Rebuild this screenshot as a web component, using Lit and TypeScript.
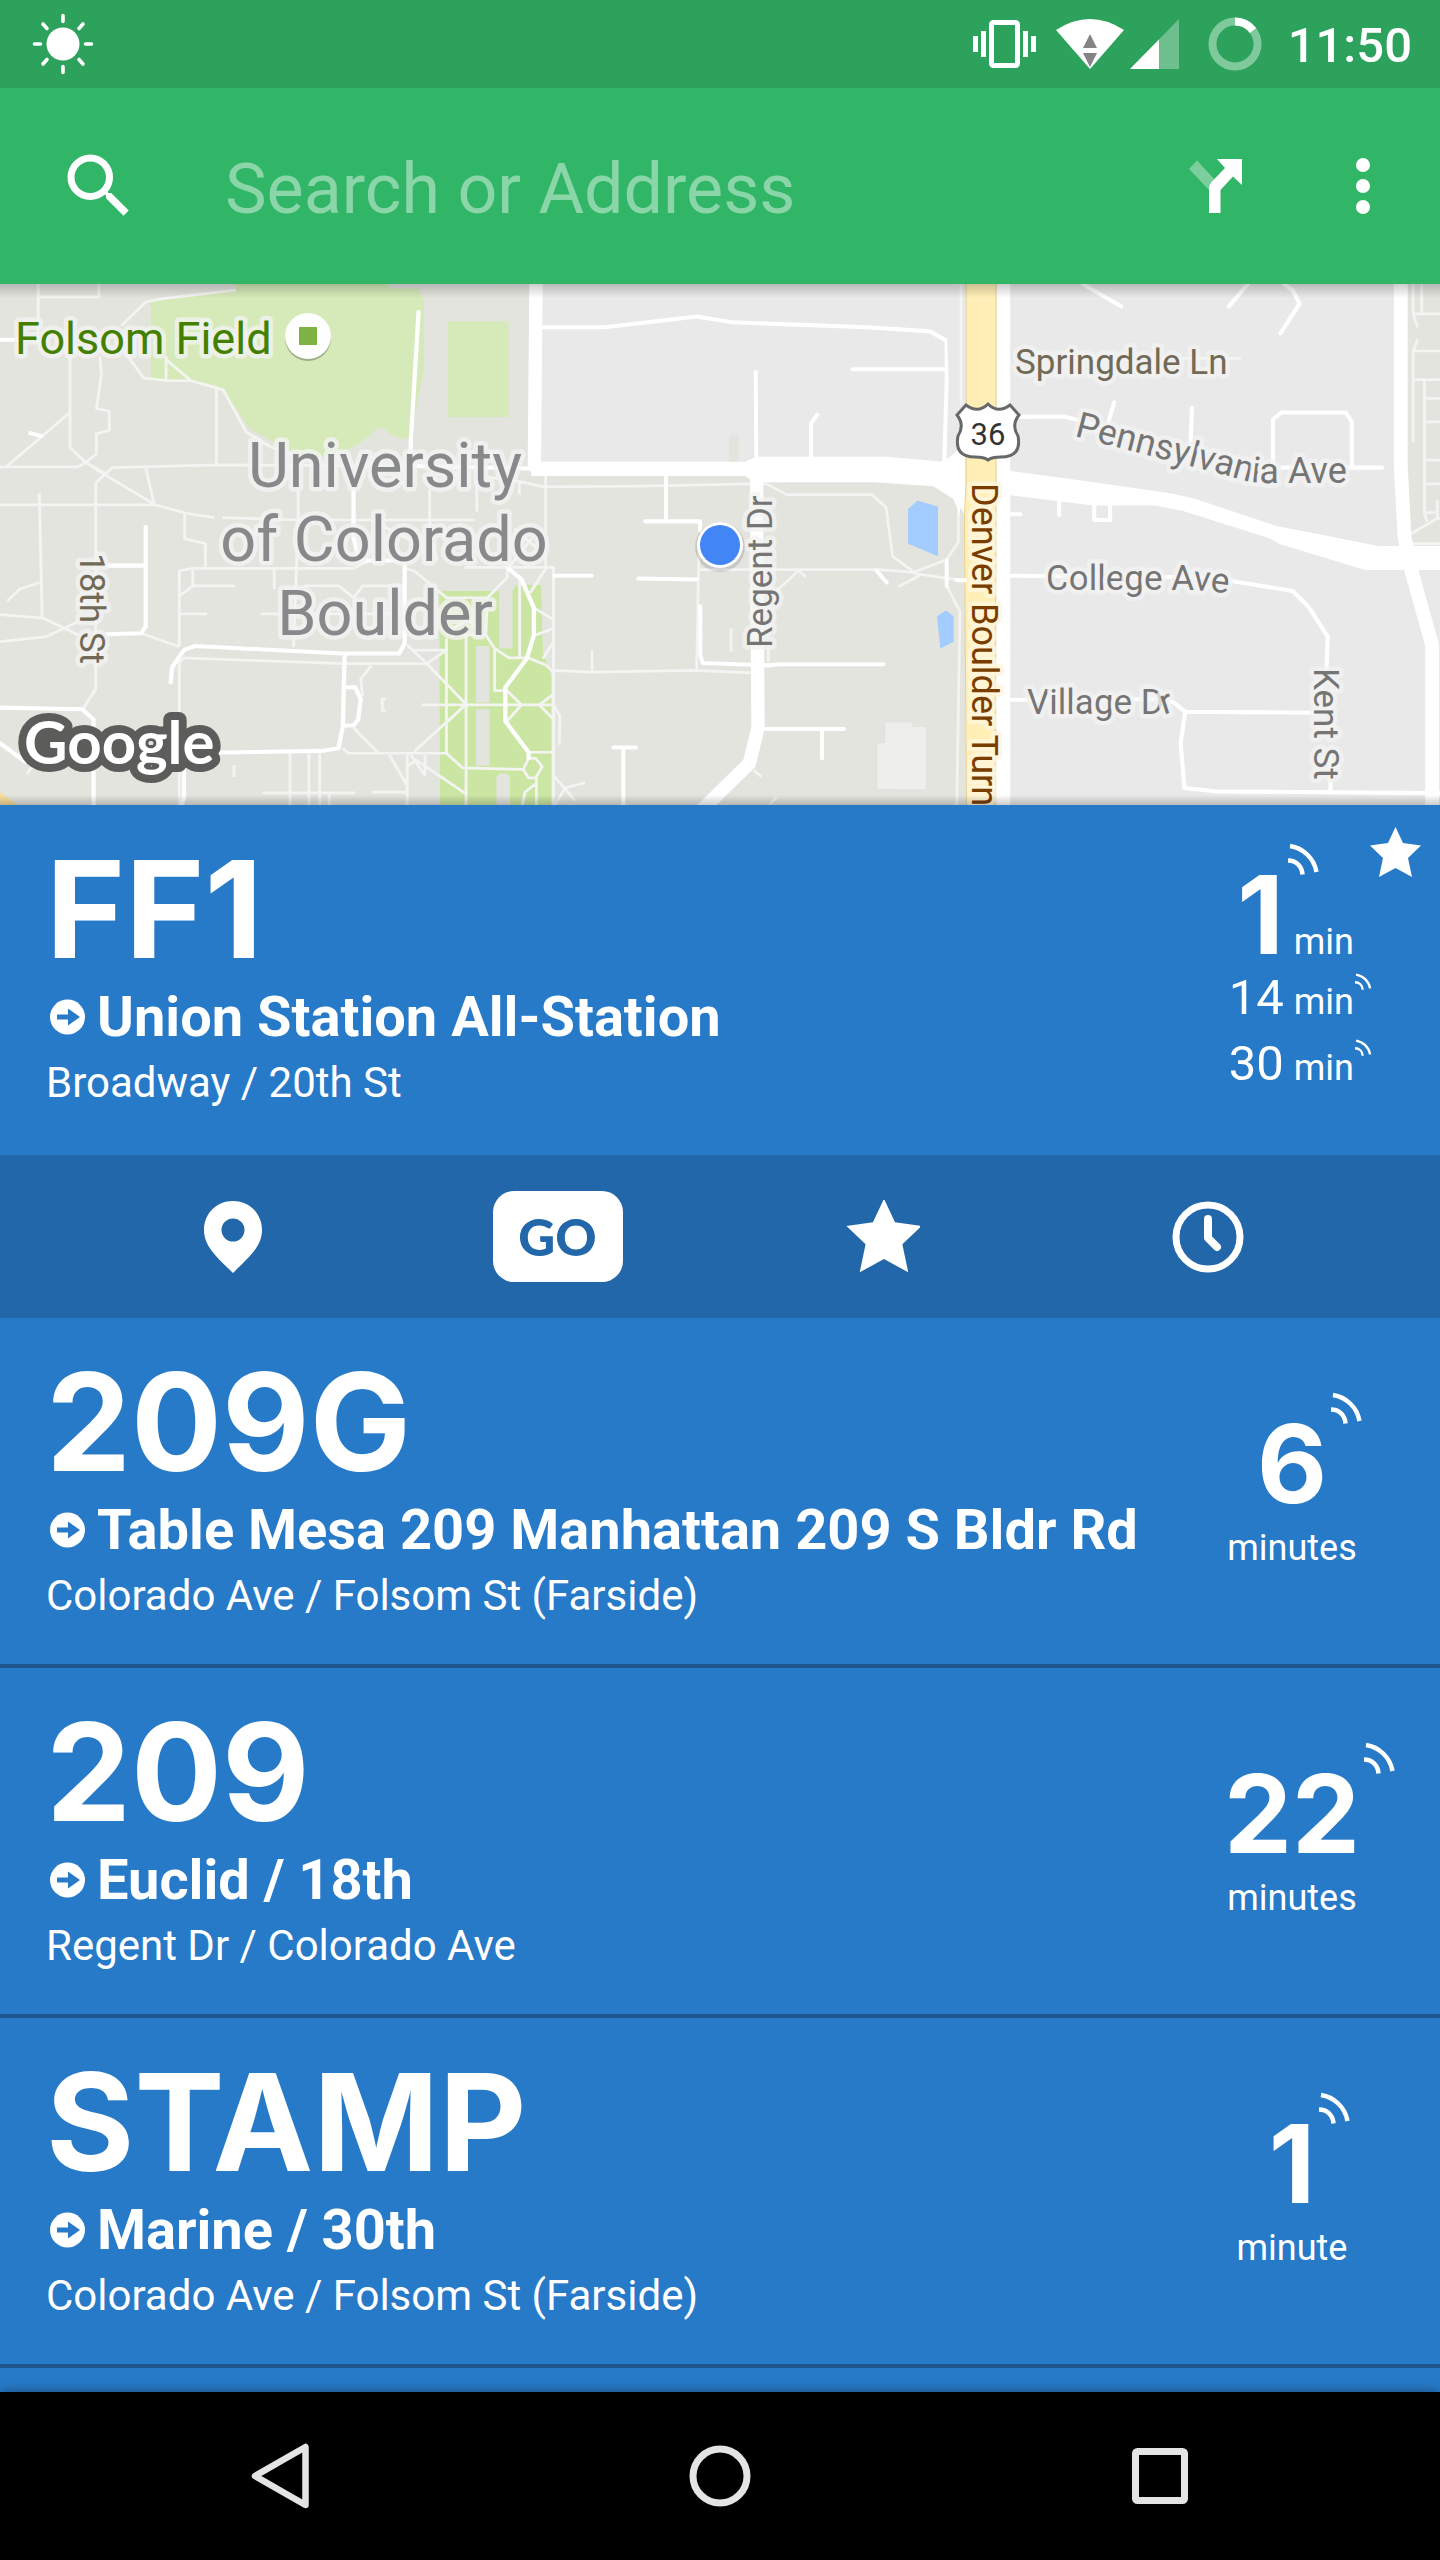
import { LitElement, html, css, svg, nothing } from "lit";
import { customElement, property } from "lit/decorators.js";

interface Route {
  id: string;
  name: string;
  direction: string;
  stop: string;
  minutes: number[];
}

const ROUTES: Route[] = [
  { id: "ff1", name: "FF1", direction: "Union Station All-Station", stop: "Broadway / 20th St", minutes: [1, 14, 30] },
  { id: "209g", name: "209G", direction: "Table Mesa 209 Manhattan 209 S Bldr Rd", stop: "Colorado Ave / Folsom St (Farside)", minutes: [6] },
  { id: "209", name: "209", direction: "Euclid / 18th", stop: "Regent Dr / Colorado Ave", minutes: [22] },
  { id: "stamp", name: "STAMP", direction: "Marine / 30th", stop: "Colorado Ave / Folsom St (Farside)", minutes: [1] },
];

const STAR = "M25.5 0 L33 16 L51 18.500 L38 31 L42 50 L25.500 41 L9 50 L13 31 L0 18.500 L18 16 Z";

const wave = (cls: string) => html`<svg class=${cls} viewBox="0 0 32 32" aria-hidden="true">
  <g fill="none" stroke="#fff" stroke-width="4.500">
    <path d="M2 3 C15 5 26 15 28.500 29" />
    <path d="M0 17.500 C8 17.500 14 23 14.500 31.500" />
  </g>
</svg>`;

/* Status bar -------------------------------------------------------- */

@customElement("status-bar")
export class StatusBar extends LitElement {
  static styles = css`
    :host { display: block; background: #2ca25c; color: #fff; font-family: Roboto, sans-serif; }
    .bar { display: flex; align-items: center; height: 88px; padding: 0 28px 0 32px; }
    .spacer { flex: 1; }
    svg { display: block; flex: none; }
    .vibrate { margin-right: 20px; }
    .wifi { margin-right: 6px; }
    .signal { margin-right: 29px; }
    .ring { margin-right: 26px; }
    .clock { font-size: 49px; font-weight: 500; line-height: 56px; padding-top: 4px; }
  `;

  render() {
    return html`<div class="bar">
      <svg width="62" height="62" viewBox="0 0 62 62" aria-hidden="true">
        <circle cx="31" cy="31" r="16.500" fill="#fff" />
        <g stroke="#fff" stroke-width="3.600" stroke-linecap="round">
          <path d="M31 2.500V8.500M31 53.500V59.500M2.500 31H8.500M53.500 31H59.500M11 11L15 15.500M47 15.500L51 11M11 51L15 46.500M47 46.500L51 51" />
        </g>
      </svg>
      <span class="spacer"></span>
      <svg class="vibrate" width="63" height="48" viewBox="0 0 63 48" aria-hidden="true">
        <path d="M0 16H5V32H0ZM8 11H13V37H8ZM50 11H55V37H50ZM58 16H63V32H58Z" fill="#fff" />
        <rect x="18.500" y="2.500" width="26" height="43" rx="2" fill="none" stroke="#fff" stroke-width="5" />
      </svg>
      <svg class="wifi" width="68" height="50" viewBox="0 0 68 50" aria-hidden="true">
        <path d="M0 11Q34 -11 68 11L34 50Z" fill="#fff" />
        <path d="M34 15L41 29H27ZM27 34H41L34 48Z" fill="#848484" />
      </svg>
      <svg class="signal" width="49" height="50" viewBox="0 0 49 50" aria-hidden="true">
        <path d="M49 0V50H0Z" fill="#6dbf8e" />
        <path d="M29 20.500V50H0Z" fill="#fff" />
      </svg>
      <svg class="ring" width="54" height="54" viewBox="0 0 54 54" aria-hidden="true">
        <circle cx="27" cy="27" r="22.500" fill="none" stroke="#7fc99c" stroke-width="8" />
        <path d="M27 4.500A22.500 22.500 0 0 1 45 13.500" fill="none" stroke="#fff" stroke-width="8" />
      </svg>
      <time class="clock">11:50</time>
    </div>`;
  }
}

/* Search bar -------------------------------------------------------- */

@customElement("search-bar")
export class SearchBar extends LitElement {
  static styles = css`
    :host { display: block; background: #31b567; font-family: Roboto, sans-serif; }
    .bar { display: flex; align-items: center; height: 196px; padding: 0 35px 0 57px; }
    .label { flex: none; cursor: text; }
    svg { display: block; }
    .field {
      flex: 1; min-width: 0; margin: 0 0 0 84px; padding: 6px 0 0; border: 0; outline: 0;
      background: none; color: #fff; font: 400 70px/84px Roboto, sans-serif;
    }
    .field::placeholder { color: #8bd6a8; opacity: 1; }
    .tool {
      flex: none; display: grid; place-items: center; width: 84px; height: 84px;
      margin: 0; padding: 0; border: 0; background: none; cursor: pointer;
    }
    .tool + .tool { margin-left: 63px; }
  `;

  render() {
    return html`<form class="bar" role="search" @submit=${(e: Event) => e.preventDefault()}>
      <label class="label" for="search" aria-label="Search">
        <svg width="84" height="84" viewBox="0 0 24 24" aria-hidden="true">
          <path fill="#fff" d="M15.500 14h-.79l-.28-.27A6.471 6.471 0 0 0 16 9.500 6.500 6.500 0 1 0 9.500 16c1.610 0 3.090-.59 4.230-1.570l.27.28v.79l5 4.990L20.490 19l-4.990-5zm-6 0C7.010 14 5 11.990 5 9.500S7.010 5 9.500 5 14 7.010 14 9.500 11.990 14 9.500 14z" />
        </svg>
      </label>
      <input class="field" id="search" type="text" placeholder="Search or Address" />
      <button class="tool" type="button" aria-label="Directions">
        <svg width="54" height="54" viewBox="0 0 54 54" aria-hidden="true">
          <path d="M0 10L8 1.500L27 22L20 31Z" fill="#7dce9d" />
          <path d="M28 0H53V26L44 17.500L31.500 31V54H20V29Q20 26 23 22.500L36 9Z" fill="#fff" />
        </svg>
      </button>
      <button class="tool" type="button" aria-label="More options">
        <svg width="16" height="58" viewBox="0 0 16 58" aria-hidden="true">
          <g fill="#fff"><circle cx="8" cy="8" r="7" /><circle cx="8" cy="29" r="7" /><circle cx="8" cy="50" r="7" /></g>
        </svg>
      </button>
    </form>`;
  }
}

/* Map ---------------------------------------------------------------- */

/* Each tile is drawn on its own grid, about three units to a map pixel. */

const westTile = svg`<g transform="translate(0 -4) scale(.35714 .33803)">
  <path class="park" d="M422 62L660 30V12H1085L1095 25H1170L1187 60V270L1163 390L1150 465L1125 472L1100 460L1075 440L1057 437L1030 465L980 500L900 522L820 512L700 440L625 325L540 298H422Z" />
  <path class="park" d="M1253 123H1424V405H1253Z" />
  <path class="lawn" d="M1230 920H1397V1090H1435V920L1445 902H1515L1520 1100L1543 1170V1568H1232Z" />
  <path class="campus" d="M1333 1083H1371V1250H1333ZM1333 1270H1371V1437H1333ZM1390 1470L1400 1460H1420L1428 1470V1568H1390Z" />
  <path fill="#f8dd9c" d="M0 1515L50 1553V1568H0Z" />
  <path class="path" d="M107 12V190M107 50H277V12M280 225L284 280L270 380L306 388V445L270 455V515L240 540L218 553H0M196 225V495L240 540L300 580L435 665M196 392L20 550M435 665H0M110 630L118 1000M435 665L520 690L600 703M517 690V765L575 780V850M408 555L432 665M240 540L300 575M268 600L315 555L610 547L1150 550M268 600V1210L232 1270M606 320V545M622 703L840 710H1330M0 990L120 1000L220 1050M0 1070L130 1055L240 1000M110 895L55 915L20 950" />
  <path class="path" d="M340 200L402 290L470 298H535L610 320L625 325L690 450L760 495L830 520M465 225V298M465 235L535 298M660 30L455 55L408 65L340 135M502 1568V1130L515 1118L960 1135H1195L1250 1095H1155M502 1085V860L540 853H990L1030 832M502 935L540 905H658M540 905V853M502 988H580M730 988H1130M768 853V915M395 1045L502 1085M835 620V710L822 1085M1203 620V760L1225 830M1335 590V685M850 905H950L990 940L1015 905H1130" />
  <path class="path" d="M1130 853L1160 860L1250 940H1365M1250 1060V1400L1295 1443L1465 1448M1140 1080L1195 1135L1305 1255L1160 1395M1305 1050V1568M1180 1257H1555M1305 1255L1250 1310M1040 1140L1010 1180L1015 1230M990 1325L1060 1400M960 1385L975 1400H1255M1550 850V1568M1300 850H1550M1140 1405V1568M1090 1405L1140 1495M1190 1405V1465L1150 1405M1140 1440L1165 1420L1305 1520M735 1517H995M1040 1515H1140M812 1400V1568M865 1400V1568M895 1400V1568M922 1520V1568M655 1435V1470M1080 1240H1070V1273H1080M1040 710L1150 770M75 1460L95 1435" />
  <path class="path" d="M1455 880V1115M1385 1090V1215H1420L1460 1257L1420 1305M1250 1050H1360M1360 1050L1385 1090L1425 1118H1480L1530 1140L1550 1160M1420 850V880L1365 940L1360 1050M1530 850L1485 925M1495 970L1550 1005M1500 1050L1550 1030M1520 1120L1550 1070M1550 1225L1510 1257L1550 1300M1480 1397H1550M1480 1415H1500L1518 1440L1500 1473H1480L1465 1448ZM1502 1473V1568M1500 1490L1470 1515L1460 1568M1260 1035L1310 1005L1350 1040M1425 850L1500 750M1440 735L1510 800" />
  <path class="road" d="M0 1265L230 1270L262 1300V1568M408 730V1025L395 1045L300 1048M300 845H408M478 1190L482 1145L515 1095L545 1083L960 1105H1118L1133 1075V840M965 1105L960 1320L948 1385L900 1393L615 1398M965 1205H995L1010 1240L1003 1300L990 1318H962M990 620V760L1005 830H1130M1172 95L1150 480V520M1150 550L1500 558M515 1450V1530L505 1568M0 1370L70 1425M0 177H50M85 453L115 462M1425 855L1460 885L1495 970V1050L1475 1120L1415 1205V1305L1480 1397V1415" />
</g>`;

const middleTile = svg`<g transform="translate(480 -4) scale(.33333 .33803)">
  <path class="block" d="M165 0H1440V560H165Z" />
  <path class="campus" d="M747 460H777V545H747Z" />
  <path class="water" d="M1284 678L1312 653L1374 670V817L1284 780ZM1371 995L1398 978L1421 995V1070L1381 1090Z" />
  <path fill="#eeeeed" stroke="#dededb" stroke-width="2" d="M1214 1307H1297V1321H1339V1509L1190 1507V1369H1214Z" />
  <path class="path" d="M0 580L115 595L190 612L480 610L810 603H860L920 635H1175L1218 672L1238 818L1318 875M1255 907L1318 875M118 595V635M197 580V855L150 925M658 760L655 880L650 1155M660 857H1200L1300 865L1400 827L1435 775V660M1300 868L1440 888M955 860L890 920M955 860L978 878M220 850V1180M220 1155L330 1160L640 1155L820 1162M336 1095V1158M753 1030V1100M865 1080V1130M220 1257L240 1290L238 1375M220 1465L285 1540M225 1553L255 1503L315 1487M820 1450L845 1470M870 1550L890 1530M1400 905L1440 980L1430 1568" />
  <path class="road" d="M186 140H375L650 108L755 125L1160 140L1350 152L1400 180V300L1393 538M1117 264H1400M827 272L829 525M993 525V425L1012 398M558 578V714M495 714H660V740M223 875H335M475 883L650 886M661 965V1110L668 1133L860 1140L900 1137H1210M857 1328H1092M1026 1328V1415M400 1383H468M430 1383V1568M1190 860L1220 895M1400 830V905" />
  <path class="avenue" d="M168 0L163 560M830 580V700L834 1325L808 1430L665 1568" />
  <path fill="#fff" d="M145 538H795L830 523H1220L1390 538L1440 500V695L1420 648L1360 610L1180 598H850L810 590L795 580H155Z" />
</g>`;

const eastTile = svg`<g transform="translate(900 -4) scale(.34439 .33803)">
  <path class="block" d="M280 0H1568V1568H280ZM130 0H280V520H150Z" />
  <path class="campus" d="M1475 0H1568V785H1485L1475 550Z" />
  <path class="path" d="M177 0V370" />
  <path class="avenue" d="M300 0V1568" />
  <path fill="#fff" d="M130 540L190 480V700L160 645Z" />
  <path fill="#ffefb7" stroke="#ead297" stroke-width="3" d="M192 0H279V560L275 1570H193L187 700L192 600Z" />
  <path class="path" d="M800 232H990M1490 12V100H1568M1515 12V100M1490 100L1503 140M1503 175L1490 210H1568M1490 210V480M1490 295H1568M1523 295V690L1530 715M1523 350H1568M1523 420H1568M1523 533H1568M1523 603H1568M1523 688H1553M1485 750L1560 705V650M1485 780H1568M1560 705H1568" />
  <path class="road" d="M530 12L642 78M1010 12L955 78M1115 12L1140 30L1160 70L1105 158M325 405L475 404L560 425M605 420L622 362M848 378L843 500M1083 550V412L1107 392H1295L1312 420V555M1110 555H1400M320 693H350M462 650V695M564 668V710H610V668M320 875L900 880L1140 920L1185 965L1242 1055L1238 1160M1250 1400V1515M320 1242L760 1240L795 1250L828 1277L1200 1280M828 1277L815 1370L826 1503L920 1513L1568 1518M165 888H190" />
  <path class="avenue" d="M1454 0V550L1465 760L1485 860L1545 1080V1568" />
  <path fill="#fff" d="M320 565L490 588L780 630L850 645L1090 727L1390 787H1568V858H1350L1100 780L1075 765L820 683L740 667H560L320 637Z" />
</g>`;

@customElement("area-map")
export class AreaMap extends LitElement {
  static styles = css`
    :host { display: block; position: relative; background: #e3e4de; }
    .map { display: block; width: 100%; height: auto; font-family: Roboto, sans-serif; }
    .campus { fill: #e3e4de; }
    .block { fill: #e9e9e9; }
    .park { fill: #d5eab8; }
    .lawn { fill: #cbe6a3; }
    .water { fill: #a3ccff; }
    .path, .road, .avenue { fill: none; stroke-linejoin: round; }
    .path { stroke: #f4f4f2; stroke-width: 8; }
    .road { stroke: #fff; stroke-width: 12; stroke-linecap: round; }
    .avenue { stroke: #fff; stroke-width: 40; }
    .text { paint-order: stroke; stroke: #f3f3f2; stroke-opacity: .8; stroke-width: 9px; stroke-linejoin: round; }
    .street { font-size: 35px; fill: #757575; }
    .long { font-size: 36px; }
    .lane { font-size: 35px; fill: #706a56; }
    .highway { font-size: 36px; fill: #7a3d00; stroke: #fff6dc; }
    .place { font-size: 63px; fill: #87898b; text-anchor: middle; }
    .venue { font-size: 45px; fill: #448000; }
    .shield { font-size: 31px; fill: #333; text-anchor: middle; }
    .brand {
      font-family: Lato, sans-serif; font-size: 60px; font-weight: 700; fill: #fff;
      paint-order: stroke; stroke: #5c5c5a; stroke-width: 16px; stroke-linejoin: round;
    }
    .shade { position: absolute; inset: 0; pointer-events: none;
      background: linear-gradient(rgba(0,0,0,.2), rgba(0,0,0,0)) top / 100% 14px no-repeat,
        linear-gradient(rgba(0,0,0,0), rgba(0,0,0,.2)) bottom / 100% 10px no-repeat; }
  `;

  render() {
    return html`<svg class="map" viewBox="0 0 1440 521" role="img" aria-label="Map">
        <rect class="campus" width="1440" height="521" />
        ${westTile}${middleTile}${eastTile}
        <defs>
          <path id="pennsylvania" d="M1074 152L1236 194Q1250 199 1270 199H1400" />
          <path id="college" d="M1046 306H1190Q1215 307 1260 314" />
          <path id="village" d="M1027 430H1166L1210 416" />
        </defs>
        <text class="text venue" x="15" y="70">Folsom Field</text>
        <text class="text place" x="385" y="203">University</text>
        <text class="text place" x="384" y="277">of Colorado</text>
        <text class="text place" x="385" y="351">Boulder</text>
        <text class="text lane" transform="translate(80 269) rotate(90)">18th St</text>
        <text class="text street" transform="translate(772 364) rotate(-90)">Regent Dr</text>
        <text class="text lane" x="1015" y="90">Springdale Ln</text>
        <text class="text street long"><textPath href="#pennsylvania">Pennsylvania Ave</textPath></text>
        <text class="text street"><textPath href="#college">College Ave</textPath></text>
        <text class="text street"><textPath href="#village">Village Dr</textPath></text>
        <text class="text street" transform="translate(1314 384) rotate(90)">Kent St</text>
        <text class="text highway" transform="translate(972 199) rotate(90)">Denver Boulder Turn</text>
        <path d="M966 121Q978 130 988 120Q998 130 1010 121L1019 131Q1011 141 1018 152Q1022 173 1001 173Q992 173 988 176Q984 173 975 173Q954 173 958 152Q965 141 957 131Z" fill="#fff" stroke="#66686a" stroke-width="3" />
        <text class="shield" x="988" y="161">36</text>
        <circle cx="308" cy="54" r="23" fill="#000" opacity=".25" />
        <circle cx="308" cy="52" r="23" fill="#fff" />
        <rect x="299" y="43" width="18" height="18" fill="#7cb342" />
        <circle cx="720" cy="263" r="25" fill="#000" opacity=".12" />
        <circle cx="720" cy="261" r="23" fill="#fff" />
        <circle cx="720" cy="261" r="20" fill="#4285f4" />
        <text class="brand" x="24" y="480">Google</text>
      </svg>
      <div class="shade"></div>`;
  }
}

/* Route row ---------------------------------------------------------- */

@customElement("route-row")
export class RouteRow extends LitElement {
  @property({ attribute: false }) route!: Route;
  @property({ type: Boolean }) favorite = false;

  static styles = css`
    :host { display: block; font-family: Roboto, sans-serif; }
    .row {
      position: relative; display: flex; justify-content: space-between;
      padding: 36px 48px 42px 46px; border-bottom: 4px solid #1f568d;
      background: #277ac8; color: #fff; text-decoration: none;
    }
    .open { border-bottom-color: #277ac8; }
    .info { flex: 1; min-width: 0; white-space: nowrap; }
    .name { font: 700 135px/136px Inter, sans-serif; }
    .direction { display: flex; align-items: center; gap: 11px; padding-left: 2px; font-size: 56px; font-weight: 700; line-height: 80px; }
    .arrow { flex: none; width: 38px; height: 38px; }
    .stop { font-size: 42px; line-height: 52px; }
    .times { flex: none; width: 200px; padding-top: 60px; display: flex; flex-direction: column; align-items: center; }
    .open .times { padding: 24px 38px 0 0; align-items: flex-end; box-sizing: border-box; }
    .time { display: flex; align-items: baseline; gap: 10px; }
    .next { position: relative; font: 700 108px/100px Inter, sans-serif; }
    .later { font-size: 49px; line-height: 66px; }
    .unit { position: relative; font-size: 36px; line-height: 68px; }
    .time .unit { line-height: 36px; }
    .wave { position: absolute; left: calc(100% + 4px); top: -22px; width: 32px; height: 32px; }
    .ripple { position: absolute; left: calc(100% + 1px); top: -11px; width: 17px; height: 17px; }
    .star { position: absolute; top: 22px; right: 19px; width: 51px; height: 50px; }
  `;

  private times() {
    const [first, ...rest] = this.route.minutes;
    if (!rest.length) {
      return html`<span class="next">${first}${wave("wave")}</span>
        <span class="unit">${first === 1 ? "minute" : "minutes"}</span>`;
    }
    return html`<span class="time"><span class="next">${first}${wave("wave")}</span><span class="unit">min</span></span>
      ${rest.map((m) => html`<span class="time"><span class="later">${m}</span><span class="unit">min${wave("ripple")}</span></span>`)}`;
  }

  render() {
    const r = this.route;
    return html`<a class="row ${r.minutes.length > 1 ? "open" : ""}" href="#${r.id}">
      <div class="info">
        <div class="name">${r.name}</div>
        <div class="direction">
          <svg class="arrow" viewBox="0 0 38 38" aria-hidden="true">
            <circle cx="19.500" cy="19" r="17.500" fill="#fff" />
            <path d="M9 16.500H20V10.500L32 19L20 27.500V21.500H9Z" fill="#277ac8" />
          </svg>
          <span>${r.direction}</span>
        </div>
        <div class="stop">${r.stop}</div>
      </div>
      <div class="times">${this.times()}</div>
      ${this.favorite
        ? html`<svg class="star" viewBox="0 0 51 50" aria-hidden="true"><path d=${STAR} fill="#fff" /></svg>`
        : nothing}
    </a>`;
  }
}

/* Actions of the open route ------------------------------------------ */

@customElement("route-actions")
export class RouteActions extends LitElement {
  static styles = css`
    :host { display: block; background: #2267aa; }
    .bar { display: grid; grid-template-columns: repeat(4, 1fr); align-items: center; height: 163px; padding: 0 70px; }
    .action { justify-self: center; display: grid; place-items: center; margin: 0; padding: 0; border: 0; background: none; cursor: pointer; }
    .go { width: 130px; height: 91px; border-radius: 21px; background: #fff; color: #2267aa; font: 900 51px/91px Lato, sans-serif; }
    svg { display: block; }
  `;

  render() {
    return html`<div class="bar">
      <button class="action" aria-label="Show on map">
        <svg width="58" height="72" viewBox="0 0 58 72" aria-hidden="true">
          <path fill="#fff" fill-rule="evenodd" d="M29 0C12 0 0 13 0 29C0 46 14 57 29 72C44 57 58 46 58 29C58 13 46 0 29 0ZM29 17.500A11.500 11.500 0 1 1 29 40.500A11.500 11.500 0 1 1 29 17.500Z" />
        </svg>
      </button>
      <button class="action go">GO</button>
      <button class="action" aria-label="Favorite">
        <svg width="75" height="74" viewBox="-1 1 51 50" aria-hidden="true"><path d=${STAR} fill="#fff" /></svg>
      </button>
      <button class="action" aria-label="Schedule">
        <svg width="72" height="72" viewBox="0 0 72 72" aria-hidden="true">
          <g fill="none" stroke="#fff">
            <circle cx="36" cy="36" r="32" stroke-width="7" />
            <path d="M36 18V37L45 46" stroke-width="8" stroke-linecap="round" stroke-linejoin="round" />
          </g>
        </svg>
      </button>
    </div>`;
  }
}

/* System navigation --------------------------------------------------- */

@customElement("system-nav")
export class SystemNav extends LitElement {
  static styles = css`
    :host { display: block; background: #000; box-shadow: 0 0 12px rgba(0, 0, 0, .4); position: relative; }
    .bar { display: grid; grid-template-columns: repeat(3, 1fr); align-items: center; height: 168px; padding: 0 60px; }
    .key { justify-self: center; margin: 0; padding: 0; border: 0; background: none; cursor: pointer; }
    svg { display: block; }
  `;

  render() {
    return html`<nav class="bar">
      <button class="key" aria-label="Back">
        <svg width="68" height="68" viewBox="0 0 68 68" aria-hidden="true">
          <path d="M59.500 5V63L9 34Z" fill="none" stroke="#e4e4e4" stroke-width="6.500" stroke-linejoin="round" />
        </svg>
      </button>
      <button class="key" aria-label="Home">
        <svg width="68" height="68" viewBox="0 0 68 68" aria-hidden="true">
          <circle cx="34" cy="34" r="27" fill="none" stroke="#e4e4e4" stroke-width="7" />
        </svg>
      </button>
      <button class="key" aria-label="Overview">
        <svg width="68" height="68" viewBox="0 0 68 68" aria-hidden="true">
          <rect x="9.500" y="9.500" width="49" height="49" rx="2" fill="none" stroke="#e4e4e4" stroke-width="7" />
        </svg>
      </button>
    </nav>`;
  }
}

/* Page ---------------------------------------------------------------- */

@customElement("app-root")
export class AppRoot extends LitElement {
  static styles = css`
    :host { display: flex; flex-direction: column; min-height: 100vh; background: #277ac8; }
    .routes { flex: 1; }
  `;

  render() {
    const [first, ...rest] = ROUTES;
    return html`
      <status-bar></status-bar>
      <search-bar></search-bar>
      <area-map></area-map>
      <main class="routes">
        <route-row .route=${first} favorite></route-row>
        <route-actions></route-actions>
        ${rest.map((r) => html`<route-row .route=${r}></route-row>`)}
      </main>
      <system-nav></system-nav>
    `;
  }
}
